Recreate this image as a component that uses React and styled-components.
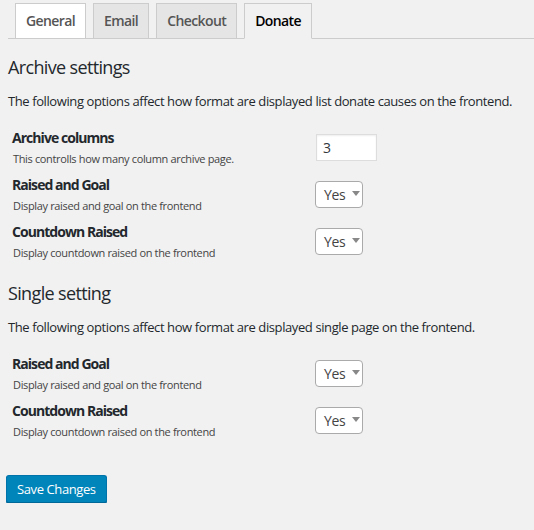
import React from "react";
import styled, { createGlobalStyle } from "styled-components";

const Global = createGlobalStyle`
  html, body { margin: 0; padding: 0; background: #f1f1f1; }
  body { font-family: "Open Sans", "Noto Sans", sans-serif; color: #23282d; }
  * { box-sizing: border-box; }
`;

const Page = styled.div`
  padding: 3px 0 0 8px;
`;

const TabBar = styled.nav`
  display: flex;
  border-bottom: 1px solid #ccc;
  height: 36px;
`;

const Tab = styled.a`
  display: block;
  margin-left: 7px;
  height: 36px;
  padding: 5px 10px;
  font-size: 14px;
  line-height: 24px;
  font-weight: 600;
  letter-spacing: -0.6px;
  text-decoration: none;
  border: 1px solid #ccc;
  border-bottom: ${(p) => (p.$active ? "1px solid #f1f1f1" : "1px solid #ccc")};
  background: ${(p) => (p.$active ? "#f1f1f1" : p.$hover ? "#fff" : "#e5e5e5")};
  color: ${(p) => (p.$active ? "#000" : "#555")};
`;

const Content = styled.div`
  padding-right: 8px;
`;

const Heading = styled.h2`
  margin: ${(p) => p.$top}px 0 0;
  font-size: 18px;
  line-height: 24px;
  font-weight: 400;
  letter-spacing: -0.65px;
  color: #23282d;
`;

const Intro = styled.p`
  margin: 12px 0 0;
  font-size: 13px;
  line-height: 20px;
  letter-spacing: -0.4px;
  color: #23282d;
`;

const Rows = styled.div`
  display: flex;
  flex-direction: column;
  gap: 7px;
  margin-top: 16px;
  padding-left: 4px;
`;

const Row = styled.div`
  display: flex;
  align-items: center;
`;

const LabelCol = styled.div`
  width: 303px;
  flex: none;
`;

const Title = styled.div`
  font-size: 14px;
  line-height: 21px;
  font-weight: 700;
  letter-spacing: -0.95px;
  color: #23282d;
`;

const Desc = styled.div`
  margin: 2px 0 0 1px;
  font-size: 11px;
  line-height: 17px;
  letter-spacing: -0.35px;
  color: #444;
`;

const NumberInput = styled.div`
  margin-left: 1px;
  width: 61px;
  height: 27px;
  padding: 0 6px;
  background: #fff;
  border: 1px solid #ddd;
  box-shadow: inset 0 1px 2px rgba(0, 0, 0, 0.07);
  font-size: 14px;
  line-height: 25px;
  color: #32373c;
`;

const Select = styled.div`
  display: flex;
  align-items: center;
  width: 48px;
  height: 27px;
  padding: 0 0 0 8px;
  background: #fff;
  border: 1px solid #aaa;
  border-radius: 4px;
  font-size: 14px;
  letter-spacing: -0.4px;
  color: #444;
  gap: 7px;
`;

const Caret = styled.span`
  width: 0;
  height: 0;
  border-left: 4px solid transparent;
  border-right: 4px solid transparent;
  border-top: 5px solid #888;
  margin-top: -2px;
`;

const SaveButton = styled.button`
  display: block;
  margin: 35px 0 0 -2px;
  height: 28px;
  padding: 0 10px;
  background: #0085ba;
  border: 1px solid #0073aa;
  border-bottom-color: #006799;
  border-radius: 3px;
  box-shadow: 0 1px 0 #006799;
  color: #fff;
  font-family: inherit;
  font-size: 13px;
  letter-spacing: -0.4px;
  line-height: 26px;
`;

const YesSelect = () => (
  <Select>
    Yes
    <Caret />
  </Select>
);

const SettingRow = ({ title, desc, children }) => (
  <Row>
    <LabelCol>
      <Title>{title}</Title>
      <Desc>{desc}</Desc>
    </LabelCol>
    {children}
  </Row>
);

export default function App() {
  return (
    <Page>
      <Global />
      <TabBar>
        <Tab $hover>General</Tab>
        <Tab>Email</Tab>
        <Tab>Checkout</Tab>
        <Tab $active>Donate</Tab>
      </TabBar>
      <Content>
        <Heading $top={16}>Archive settings</Heading>
        <Intro>
          The following options affect how format are displayed list donate causes on the frontend.
        </Intro>
        <Rows>
          <SettingRow title="Archive columns" desc="This controlls how many column archive page.">
            <NumberInput>3</NumberInput>
          </SettingRow>
          <SettingRow title="Raised and Goal" desc="Display raised and goal on the frontend">
            <YesSelect />
          </SettingRow>
          <SettingRow title="Countdown Raised" desc="Display countdown raised on the frontend">
            <YesSelect />
          </SettingRow>
        </Rows>
        <Heading $top={20}>Single setting</Heading>
        <Intro>The following options affect how format are displayed single page on the frontend.</Intro>
        <Rows>
          <SettingRow title="Raised and Goal" desc="Display raised and goal on the frontend">
            <YesSelect />
          </SettingRow>
          <SettingRow title="Countdown Raised" desc="Display countdown raised on the frontend">
            <YesSelect />
          </SettingRow>
        </Rows>
        <SaveButton>Save Changes</SaveButton>
      </Content>
    </Page>
  );
}
